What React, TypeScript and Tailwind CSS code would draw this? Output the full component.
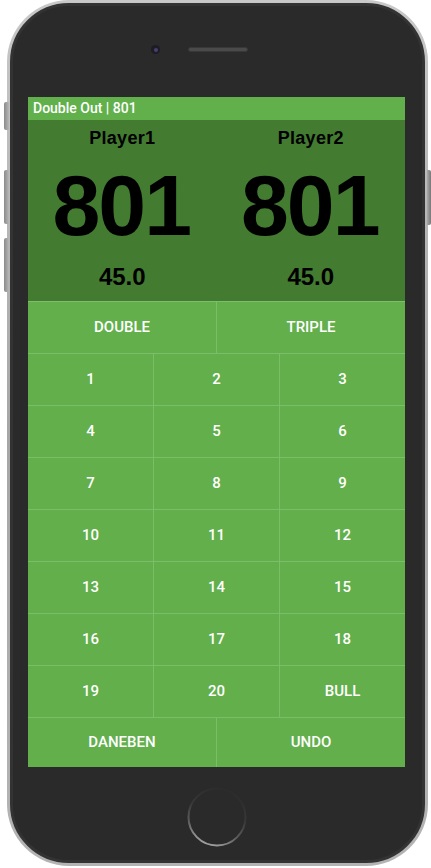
import React from "react";

const rows = [
  ["1", "2", "3"],
  ["4", "5", "6"],
  ["7", "8", "9"],
  ["10", "11", "12"],
  ["13", "14", "15"],
  ["16", "17", "18"],
  ["19", "20", "BULL"],
];

const players = [
  { name: "Player1", score: 801, avg: "45.0" },
  { name: "Player2", score: 801, avg: "45.0" },
];

function Key({ label, first }: { label: string; first?: boolean }) {
  return (
    <button
      className={
        "flex-1 h-full flex items-center justify-center border-t border-[#7cbd6a] text-white text-[15px] font-medium " +
        (first ? "" : "border-l")
      }
    >
      {label}
    </button>
  );
}

export default function App() {
  return (
    <div className="relative w-[431px] h-[868px] bg-white" style={{ fontFamily: "Roboto, 'Liberation Sans', sans-serif" }}>
      {/* side buttons */}
      <div className="absolute left-[4px] top-[102px] w-[5px] h-[28px] rounded-l-[2px] bg-gradient-to-r from-[#8a8a8a] to-[#b8b8b8]" />
      <div className="absolute left-[4px] top-[170px] w-[5px] h-[54px] rounded-l-[2px] bg-gradient-to-r from-[#8a8a8a] to-[#b8b8b8]" />
      <div className="absolute left-[4px] top-[238px] w-[5px] h-[54px] rounded-l-[2px] bg-gradient-to-r from-[#8a8a8a] to-[#b8b8b8]" />
      <div className="absolute left-[427px] top-[170px] w-[4px] h-[55px] rounded-r-[2px] bg-gradient-to-l from-[#777] to-[#aaa]" />

      <div className="ml-[7px] w-[421px] h-[866px] rounded-[62px] bg-gradient-to-b from-[#c8c8c8] via-[#a6a6a6] to-[#b4b4b4] p-[3px]">
        <div className="h-full rounded-[59px] bg-[#2a2a2a] border-[3px] border-[#333333] flex flex-col items-start">
          <div className="flex items-center mt-[39px] ml-[138px]">
            <div className="w-[9px] h-[9px] rounded-full bg-[#1c1c24] flex items-center justify-center">
              <div className="w-[4px] h-[4px] rounded-full bg-[#4a3f70]" />
            </div>
            <div className="ml-[28px] w-[60px] h-[5px] rounded-full bg-[#4a4a4a] border border-[#383838]" />
          </div>

          <div className="mt-[43px] ml-[15px] w-[377px] h-[670px] flex flex-col bg-[#62af4c]">
            <div className="h-[23px] bg-[#62b04c] flex items-center pl-[5px] text-white text-[14px] font-medium">
              Double Out | 801
            </div>
            <div className="h-[181px] bg-[#437b31] flex" style={{ fontFamily: "'Liberation Sans', Arial, sans-serif" }}>
              {players.map((p) => (
                <div key={p.name} className="flex-1 flex flex-col items-center text-black font-bold">
                  <div className="mt-[7px] text-[18px] leading-[22px] tracking-[0.3px]">{p.name}</div>
                  <div className="mt-[13px] text-[86px] leading-[86px] tracking-[-2px] pr-[2px]">{p.score}</div>
                  <div className="mt-[15px] text-[24px] leading-[28px]">{p.avg}</div>
                </div>
              ))}
            </div>
            <div className="h-[52px] flex">
              <Key label="DOUBLE" first />
              <Key label="TRIPLE" />
            </div>
            {rows.map((r, i) => (
              <div key={i} className="h-[52px] flex">
                {r.map((n, j) => (
                  <Key key={n} label={n} first={j === 0} />
                ))}
              </div>
            ))}
            <div className="h-[50px] flex">
              <Key label="DANEBEN" first />
              <Key label="UNDO" />
            </div>
          </div>

          <div className="mt-[20px] ml-[174px]">
            <svg width="60" height="60" viewBox="0 0 60 60">
              <defs>
                <linearGradient id="ring" x1="0.75" y1="0" x2="0.4" y2="1">
                  <stop offset="0" stopColor="#2a2a2a" />
                  <stop offset="0.45" stopColor="#383838" />
                  <stop offset="0.75" stopColor="#5e5e5e" />
                  <stop offset="1" stopColor="#a0a0a0" />
                </linearGradient>
              </defs>
              <circle cx="30" cy="30" r="28.5" fill="none" stroke="url(#ring)" strokeWidth="2" />
            </svg>
          </div>
        </div>
      </div>
    </div>
  );
}
